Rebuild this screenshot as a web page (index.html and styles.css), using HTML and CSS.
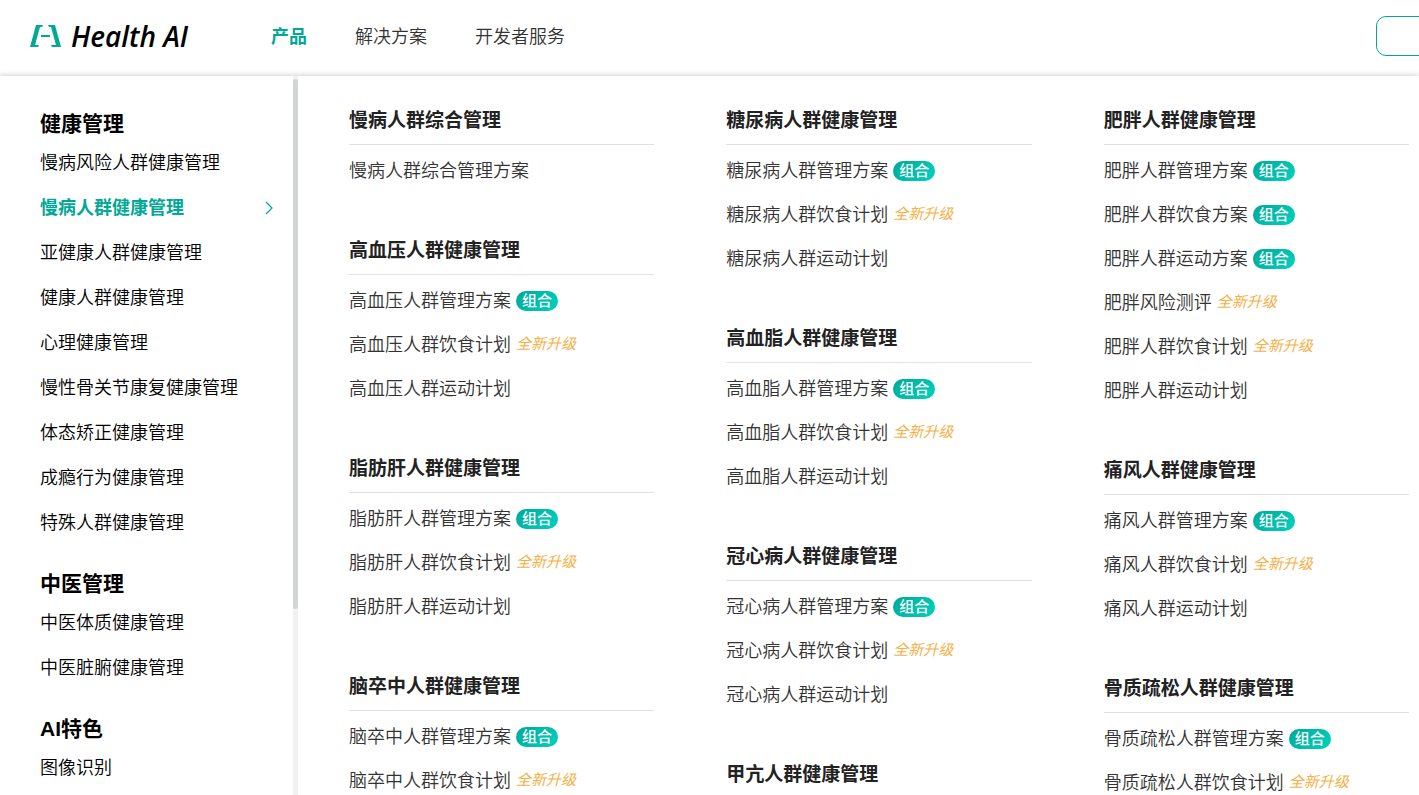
FILE: index.html
```html
<!DOCTYPE html>
<html lang="zh-CN">
<head>
<meta charset="utf-8">
<meta name="viewport" content="width=device-width, initial-scale=1">
<title>Health AI</title>
<link rel="stylesheet" href="styles.css">
</head>
<body>
<header class="header">
  <a class="logo" href="#">
    <svg class="logo-mark" viewBox="0 0 31 22" aria-hidden="true"><path d="M6 0h7l-1 2h-2L5 20h4l-1 2H0zM25 0h-7l1 2h2l5 18h-5l1 2h9z"/><path d="M11 10h9v2h-9z"/></svg>
    <span class="logo-text">Health AI</span>
  </a>
  <nav class="nav">
    <a class="nav-link active" href="#">产品</a>
    <a class="nav-link" href="#">解决方案</a>
    <a class="nav-link" href="#">开发者服务</a>
  </nav>
  <button class="header-button" type="button" aria-label="登录"></button>
</header>
<div class="panel">
  <aside class="sidebar">
    <div class="side-list">
      <section>
        <h2 class="side-title">健康管理</h2>
        <a class="side-link" href="#">慢病风险人群健康管理</a>
        <a class="side-link active" href="#">慢病人群健康管理<svg class="chevron" viewBox="0 0 8 14" aria-hidden="true"><path d="M1 1l6 6-6 6"/></svg></a>
        <a class="side-link" href="#">亚健康人群健康管理</a>
        <a class="side-link" href="#">健康人群健康管理</a>
        <a class="side-link" href="#">心理健康管理</a>
        <a class="side-link" href="#">慢性骨关节康复健康管理</a>
        <a class="side-link" href="#">体态矫正健康管理</a>
        <a class="side-link" href="#">成瘾行为健康管理</a>
        <a class="side-link" href="#">特殊人群健康管理</a>
      </section>
      <section>
        <h2 class="side-title">中医管理</h2>
        <a class="side-link" href="#">中医体质健康管理</a>
        <a class="side-link" href="#">中医脏腑健康管理</a>
      </section>
      <section>
        <h2 class="side-title">AI特色</h2>
        <a class="side-link" href="#">图像识别</a>
      </section>
    </div>
    <div class="scroll-track"><div class="scroll-thumb"></div></div>
  </aside>
  <main class="columns">
    <div class="column">
      <section>
        <h3 class="group-title">慢病人群综合管理</h3>
        <a class="item" href="#">慢病人群综合管理方案</a>
      </section>
      <section>
        <h3 class="group-title">高血压人群健康管理</h3>
        <a class="item" href="#">高血压人群管理方案<span class="badge">组合</span></a>
        <a class="item" href="#">高血压人群饮食计划<em class="upgrade">全新升级</em></a>
        <a class="item" href="#">高血压人群运动计划</a>
      </section>
      <section>
        <h3 class="group-title">脂肪肝人群健康管理</h3>
        <a class="item" href="#">脂肪肝人群管理方案<span class="badge">组合</span></a>
        <a class="item" href="#">脂肪肝人群饮食计划<em class="upgrade">全新升级</em></a>
        <a class="item" href="#">脂肪肝人群运动计划</a>
      </section>
      <section>
        <h3 class="group-title">脑卒中人群健康管理</h3>
        <a class="item" href="#">脑卒中人群管理方案<span class="badge">组合</span></a>
        <a class="item" href="#">脑卒中人群饮食计划<em class="upgrade">全新升级</em></a>
      </section>
    </div>
    <div class="column">
      <section>
        <h3 class="group-title">糖尿病人群健康管理</h3>
        <a class="item" href="#">糖尿病人群管理方案<span class="badge">组合</span></a>
        <a class="item" href="#">糖尿病人群饮食计划<em class="upgrade">全新升级</em></a>
        <a class="item" href="#">糖尿病人群运动计划</a>
      </section>
      <section>
        <h3 class="group-title">高血脂人群健康管理</h3>
        <a class="item" href="#">高血脂人群管理方案<span class="badge">组合</span></a>
        <a class="item" href="#">高血脂人群饮食计划<em class="upgrade">全新升级</em></a>
        <a class="item" href="#">高血脂人群运动计划</a>
      </section>
      <section>
        <h3 class="group-title">冠心病人群健康管理</h3>
        <a class="item" href="#">冠心病人群管理方案<span class="badge">组合</span></a>
        <a class="item" href="#">冠心病人群饮食计划<em class="upgrade">全新升级</em></a>
        <a class="item" href="#">冠心病人群运动计划</a>
      </section>
      <section>
        <h3 class="group-title">甲亢人群健康管理</h3>
      </section>
    </div>
    <div class="column">
      <section>
        <h3 class="group-title">肥胖人群健康管理</h3>
        <a class="item" href="#">肥胖人群管理方案<span class="badge">组合</span></a>
        <a class="item" href="#">肥胖人群饮食方案<span class="badge">组合</span></a>
        <a class="item" href="#">肥胖人群运动方案<span class="badge">组合</span></a>
        <a class="item" href="#">肥胖风险测评<em class="upgrade">全新升级</em></a>
        <a class="item" href="#">肥胖人群饮食计划<em class="upgrade">全新升级</em></a>
        <a class="item" href="#">肥胖人群运动计划</a>
      </section>
      <section>
        <h3 class="group-title">痛风人群健康管理</h3>
        <a class="item" href="#">痛风人群管理方案<span class="badge">组合</span></a>
        <a class="item" href="#">痛风人群饮食计划<em class="upgrade">全新升级</em></a>
        <a class="item" href="#">痛风人群运动计划</a>
      </section>
      <section>
        <h3 class="group-title">骨质疏松人群健康管理</h3>
        <a class="item" href="#">骨质疏松人群管理方案<span class="badge">组合</span></a>
        <a class="item" href="#">骨质疏松人群饮食计划<em class="upgrade">全新升级</em></a>
      </section>
    </div>
  </main>
</div>
</body>
</html>
```
FILE: styles.css
```css
* { box-sizing: border-box; }

body {
  margin: 0;
  height: 100vh;
  display: flex;
  flex-direction: column;
  overflow: hidden;
  background: #fff;
  color: #333;
  font-family: "Liberation Sans", "Noto Sans CJK SC", sans-serif;
  font-size: 18px;
  font-weight: 350;
}

a { color: inherit; text-decoration: none; }
h2, h3 { margin: 0; font-weight: 700; }

.header {
  flex: none;
  display: flex;
  align-items: center;
  height: 76px;
  padding: 0 0 4px 30px;
  overflow: hidden;
}

.logo { display: flex; align-items: center; gap: 10px; width: 241px; flex: none; color: #000; }
.logo-mark { flex: none; width: 31px; height: 22px; fill: #00a896; }
.logo-text { font: italic 600 28px/36px "Open Sans", sans-serif; white-space: nowrap; }

.nav { display: flex; gap: 48px; padding-bottom: 3px; }
.nav-link.active, .side-link.active { color: #00a896; font-weight: 700; }

.header-button {
  flex: none;
  width: 120px;
  height: 40px;
  margin-left: auto;
  margin-right: -77px;
  border: 1px solid #00a896;
  border-radius: 10px;
  background: #fff;
}

.panel {
  flex: 1;
  min-height: 0;
  display: flex;
  background: #fff;
  box-shadow: 0 0 6px rgba(0, 0, 0, 0.25);
}

.sidebar { flex: none; display: flex; width: 298px; color: #000; }
.side-list {
  flex: 1;
  display: flex;
  flex-direction: column;
  gap: 23px;
  padding: 32px 20px 0 40px;
  overflow: hidden;
}
.side-title { font-size: 21px; line-height: 32px; }
.side-link {
  display: flex;
  align-items: center;
  justify-content: space-between;
  height: 45px;
  padding-bottom: 3px;
  white-space: nowrap;
}
.chevron { width: 8px; height: 14px; margin-top: 3px; fill: none; stroke: #00a896; stroke-width: 1.2; }

.scroll-track { width: 5px; padding-top: 3px; background: #f1f1f1; }
.scroll-thumb { height: 74%; border-radius: 3px; background: #d3d4d6; }

.columns {
  flex: 1;
  display: grid;
  grid-template-columns: repeat(3, 1fr);
  gap: 72px;
  padding: 31px 10px 0 51px;
  overflow: hidden;
}
.column { display: flex; flex-direction: column; gap: 45px; }
.group-title {
  margin-bottom: 3px;
  padding-bottom: 9px;
  border-bottom: 1px solid #e2e2e2;
  color: #222;
  font-size: 19px;
  line-height: 28px;
}
.item { display: flex; align-items: center; gap: 5px; height: 44px; padding-bottom: 3px; white-space: nowrap; }
.badge {
  margin-top: 4px;
  padding: 0 6px;
  border-radius: 10px;
  background: linear-gradient(135deg, #00a896, #00d2c0);
  color: #fff;
  font-size: 15px;
  font-weight: 500;
  line-height: 20px;
}
.upgrade { color: #f6b044; font-size: 15px; font-weight: 400; }
```
